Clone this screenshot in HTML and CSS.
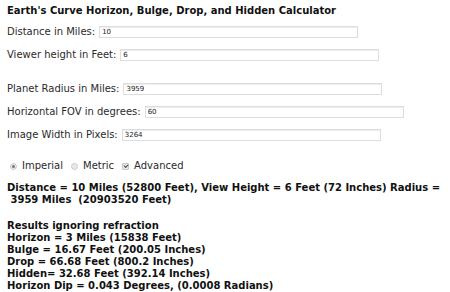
FILE: index.html
```html
<!DOCTYPE html>
<html>
<head lang="en">
    <meta charset="UTF-8">
    <title>Earth's Curve Calculator</title>
    <link rel="stylesheet" href="styles.css">
</head>
<body>
    <div id="calc">
        <h1 class="title">Earth's Curve Horizon, Bulge, Drop, and Hidden Calculator</h1>
        <div class="group">
            <label class="row">Distance in Miles: <input class="num" type="text" value="10"></label>
            <label class="row">Viewer height in Feet: <input class="num" type="text" value="6"></label>
        </div>
        <div class="group advanced">
            <label class="row">Planet Radius in Miles: <input class="num" type="text" value="3959"></label>
            <label class="row">Horizontal FOV in degrees: <input class="num" type="text" value="60"></label>
            <label class="row">Image Width in Pixels: <input class="num" type="text" value="3264"></label>
        </div>
        <div class="units">
            <label><input class="radio" type="radio" name="units" checked> Imperial</label>
            <label><input class="radio" type="radio" name="units"> Metric</label>
            <label><input class="check" type="checkbox" checked> Advanced</label>
        </div>
        <p class="summary">Distance = 10 Miles (52800 Feet), View Height = 6 Feet (72 Inches) Radius = &nbsp;3959 Miles &nbsp;(20903520 Feet)</p>
        <div class="results">
            Results ignoring refraction<br>
            Horizon = 3 Miles (15838 Feet)<br>
            Bulge = 16.67 Feet (200.05 Inches)<br>
            Drop = 66.68 Feet (800.2 Inches)<br>
            Hidden= 32.68 Feet (392.14 Inches)<br>
            Horizon Dip = 0.043 Degrees, (0.0008 Radians)
        </div>
    </div>
</body>
</html>
```

FILE: styles.css
```css
*{
    margin: 0;
    padding: 0;
}
body{
    font-family: "DejaVu Sans", Verdana, sans-serif;
    font-size: 10px;
    color: #2a2a2a;
    background: #fff;
    padding: 5px 7px 4px;
}
.title{
    font-size: 10px;
    font-weight: bold;
    line-height: 12px;
    color: #111;
}
.group{
    display: flex;
    flex-direction: column;
    gap: 11px;
    margin-top: 9px;
}
.group.advanced{
    margin-top: 22px;
}
.row{
    display: flex;
    align-items: center;
    gap: 4px;
    line-height: 12px;
}
.num{
    width: 259px;
    height: 12px;
    box-sizing: border-box;
    border: 1px solid #ddd;
    box-shadow: inset 0 1px 0 #eee;
    font-family: "DejaVu Sans", sans-serif;
    font-size: 7px;
    padding: 0 2px;
    color: #222;
}
.units{
    display: flex;
    gap: 5px;
    margin-top: 19px;
    line-height: 12px;
}
.units label{
    display: flex;
    align-items: center;
    gap: 5px;
}
.radio, .check{
    appearance: none;
    -webkit-appearance: none;
    width: 7px;
    height: 7px;
    margin-left: 3px;
    border: 1px solid #c8c8c8;
    background: #e8e8e8;
    box-sizing: border-box;
    position: relative;
}
.radio{
    border-radius: 50%;
}
.radio:checked::after{
    content: "";
    position: absolute;
    left: 1px;
    top: 1px;
    width: 3px;
    height: 3px;
    border-radius: 50%;
    background: #777;
}
.check{
    border-radius: 1px;
}
.check:checked::after{
    content: "";
    position: absolute;
    left: 1px;
    top: 0;
    width: 3px;
    height: 2px;
    border-left: 1px solid #444;
    border-bottom: 1px solid #444;
    transform: rotate(-45deg);
}
.summary{
    margin-top: 10px;
    font-weight: bold;
    line-height: 12px;
    color: #111;
}
.results{
    margin-top: 14px;
    font-weight: bold;
    line-height: 12px;
    color: #111;
}
```
